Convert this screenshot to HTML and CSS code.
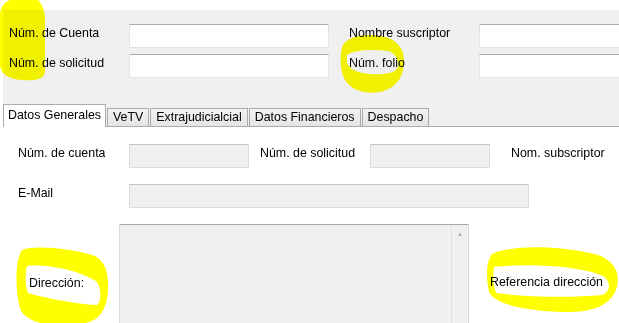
FILE: index.html
```html
<!DOCTYPE html>
<html lang="es">
<head>
    <meta charset="UTF-8">
    <meta name="viewport" content="width=device-width, initial-scale=1.0">
    <title>Datos Generales</title>
    <link rel="stylesheet" href="styles.css">
</head>
<body>
    <div class="header">
        <div class="search">
            <label class="lbl">Núm. de Cuenta</label>
            <input type="text" class="field">
            <label class="lbl">Nombre suscriptor</label>
            <input type="text" class="field wide">
            <label class="lbl">Núm. de solicitud</label>
            <input type="text" class="field">
            <label class="lbl">Núm. folio</label>
            <input type="text" class="field wide">
        </div>
        <div class="tabs">
            <div class="tab active">Datos Generales</div>
            <div class="tab">VeTV</div>
            <div class="tab">Extrajudicialcial</div>
            <div class="tab">Datos Financieros</div>
            <div class="tab">Despacho</div>
        </div>
    </div>

    <div class="tab-body">
        <div class="row">
            <label class="lbl col1">Núm. de cuenta</label>
            <input type="text" class="box" disabled>
            <label class="lbl col2">Núm. de solicitud</label>
            <input type="text" class="box" disabled>
            <label class="lbl col3">Nom. subscriptor</label>
        </div>
        <div class="row">
            <label class="lbl col1">E-Mail</label>
            <input type="text" class="box email" disabled>
        </div>
        <div class="row area-row">
            <label class="lbl dir">Dirección:</label>
            <div class="textarea">
                <div class="area-text"></div>
                <div class="scroll"><span class="arrow">&#9650;</span></div>
            </div>
            <label class="lbl ref">Referencia dirección</label>
        </div>
    </div>

    <!-- marcas de resaltador -->
    <svg class="marks" width="619" height="323" viewBox="0 0 619 323">
        <path fill="#ffff00" d="M 10 0 L 38 0 C 42 4, 45 10, 45 20 L 45 72 C 44 79, 36 81, 22 80 C 8 79, 1 74, 0 65 L 0 15 C 0 8, 4 2, 10 0 Z"/>
        <path fill="#ffff00" fill-rule="evenodd" d="M 343 45 C 348 36, 365 33, 382 36 C 396 39, 404 48, 404 60 C 404 75, 398 88, 380 92 C 362 95, 345 88, 342 72 C 340 62, 340 52, 343 45 Z M 347 55 C 354 50, 370 49, 388 51 C 395 53, 399 60, 398 67 C 396 73, 385 75, 370 74 C 356 73, 348 68, 347 62 Z"/>
        <path fill="#ffff00" fill-rule="evenodd" d="M 22 250 C 35 245, 70 248, 95 256 C 106 262, 109 275, 108 290 C 107 308, 100 321, 85 323 L 40 323 C 30 320, 22 315, 20 308 C 15 290, 15 260, 22 250 Z M 27 266 C 45 264, 80 270, 97 282 C 102 290, 101 302, 97 305 C 75 304, 45 298, 28 293 C 25 285, 25 275, 27 266 Z"/>
        <path fill="#ffff00" fill-rule="evenodd" d="M 492 254 C 510 245, 560 245, 598 255 C 610 259, 618 268, 618 280 C 617 300, 600 312, 570 312 C 530 312, 495 305, 489 292 C 486 278, 486 262, 492 254 Z M 494 267 C 530 263, 580 266, 603 276 C 612 282, 610 292, 602 295 C 570 298, 525 297, 496 293 C 493 285, 493 275, 494 267 Z"/>
    </svg>
</body>
</html>
```

FILE: styles.css
```css
body {
    margin: 0;
    background: #fff;
    font-family: "Liberation Sans", Arial, sans-serif;
    font-size: 12.4px;
    color: #000;
    width: 619px;
    height: 323px;
    overflow: hidden;
    position: relative;
}
.header {
    margin: 10px 0 0 3px;
    background-color: #f0f0f0;
}
.search {
    display: grid;
    grid-template-columns: 120px 220px 130px 140px;
    grid-auto-rows: 24px;
    row-gap: 6px;
    align-items: center;
    padding: 14px 0 0 6px;
}
.lbl {
    padding-bottom: 6px;
    white-space: nowrap;
}
.field {
    box-sizing: border-box;
    width: 200px;
    height: 24px;
    margin: 0;
    background: #fff;
    border: 1px solid #e3e3e3;
    border-top-color: #ababab;
}
.field.wide {
    width: 140px;
    border-right: none;
}
.tabs {
    display: flex;
    align-items: flex-end;
    margin-top: 26px;
    border-bottom: 1px solid #acacac;
}
.tab {
    box-sizing: border-box;
    height: 18px;
    padding: 0 5px;
    margin-left: 1px;
    border: 1px solid #acacac;
    border-bottom: none;
    background: linear-gradient(#f2f2f2, #e5e5e5);
    line-height: 17px;
    white-space: nowrap;
}
.tab.active {
    height: 23px;
    margin: 0 0 -1px 0;
    padding: 0 4px;
    background: #fff;
    line-height: 20px;
}
.tab-body {
    padding: 17px 0 0 18px;
}
.row {
    display: flex;
    align-items: center;
    height: 24px;
    margin-bottom: 16px;
}
.col1 {
    width: 111px;
}
.col2 {
    width: 110px;
    margin-left: 11px;
}
.col3 {
    margin-left: 21px;
}
.box {
    box-sizing: border-box;
    width: 120px;
    height: 24px;
    margin: 0;
    background: #f0f0f0;
    border: 1px solid #dcdcdc;
    border-top-color: #c4c4c4;
}
.box.email {
    width: 400px;
}
.area-row {
    align-items: flex-start;
    height: 99px;
    margin-bottom: 0;
}
.dir {
    width: 90px;
    margin: 52px 0 0 11px;
    padding: 0;
}
.ref {
    margin: 51px 0 0 21px;
    padding: 0;
}
.textarea {
    box-sizing: border-box;
    display: flex;
    width: 350px;
    height: 99px;
    background: #f0f0f0;
    border: 1px solid #dadada;
    border-top-color: #a8a8a8;
    border-bottom: none;
}
.area-text {
    flex: 1;
}
.scroll {
    width: 16px;
    border-left: 1px solid #e2e2e2;
    background: #f0f0f0;
    text-align: center;
}
.arrow {
    display: block;
    margin-top: 6px;
    font-size: 6px;
    color: #a8a8a8;
}
.marks {
    position: absolute;
    top: 0;
    left: 0;
    pointer-events: none;
    mix-blend-mode: multiply;
}
```
